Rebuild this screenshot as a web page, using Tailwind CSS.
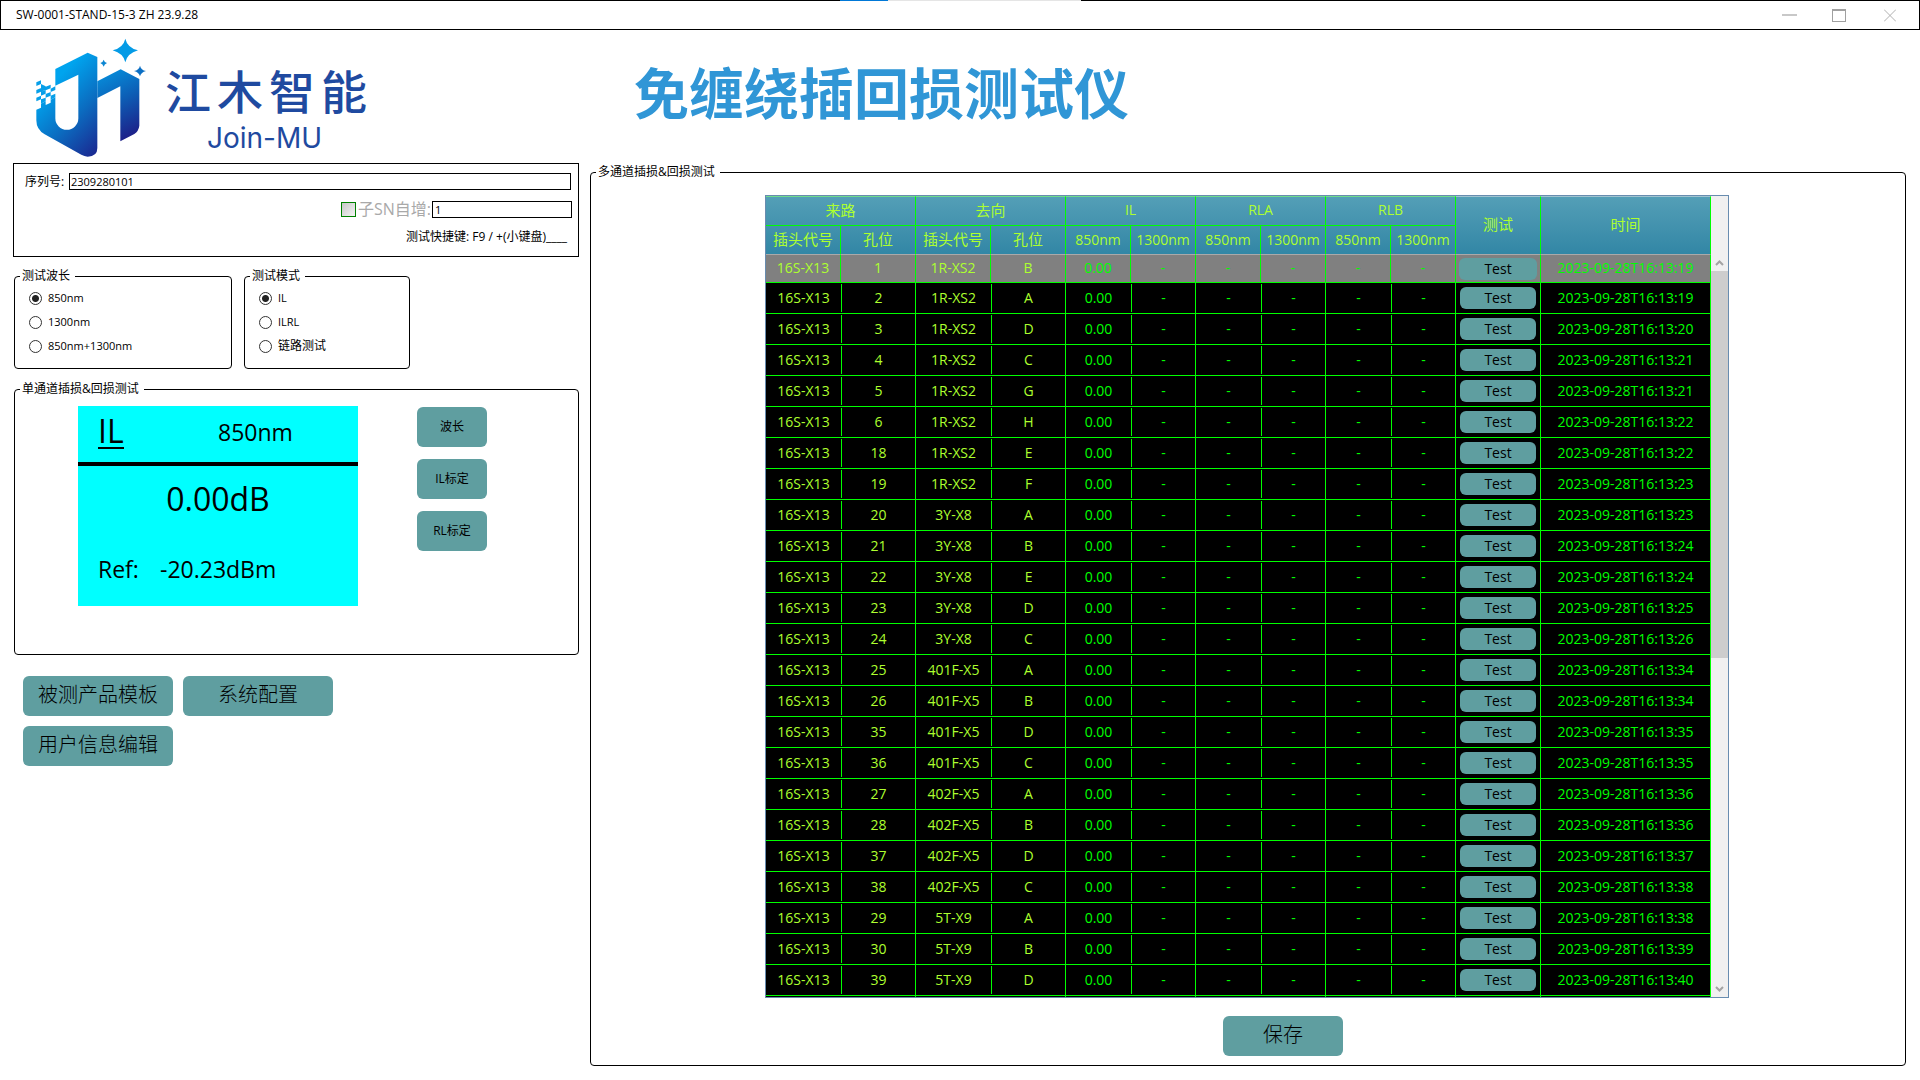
<!DOCTYPE html>
<html lang="zh-CN">
<head>
    <meta charset="UTF-8">
    <meta name="viewport" content="width=device-width, initial-scale=1.0">
    <title>SW-0001-STAND-15-3 ZH 23.9.28</title>
    <script src="https://cdn.jsdelivr.net/npm/@tailwindcss/browser@4"></script>
    <style>
        body {
            font-family: "Open Sans", "Noto Sans CJK SC", sans-serif;
        }
    </style>
</head>
<body class="bg-white text-black text-[12px] leading-4 min-h-screen flex flex-col">
    <!-- Title bar -->
    <header class="relative h-[30px] shrink-0 border border-black flex items-center justify-between pl-[15px] pr-[23px]">
        <span>SW-0001-STAND-15-3 ZH 23.9.28</span>
        <div class="absolute -top-px left-[839px] w-[241px] h-px bg-[#e5e5e5]">
            <div class="w-12 h-px bg-[#0078d7]"></div>
        </div>
        <div class="flex items-center gap-[35px] text-[#a0a0a0]">
            <button type="button" aria-label="最小化">
                <svg class="w-[15px] h-[13px]" viewBox="0 0 15 13" shape-rendering="crispEdges"><path d="M0 5h15v2H0z" fill="#c8c8c8"/></svg>
            </button>
            <button type="button" aria-label="最大化">
                <svg class="w-[14px] h-[13px]" viewBox="0 0 14 13" shape-rendering="crispEdges"><path d="M0 0h14v13H0zM1 2v10h12V2z" fill="#a0a0a0" fill-rule="evenodd"/></svg>
            </button>
            <button type="button" aria-label="关闭" class="ml-[3px]">
                <svg class="w-[12px] h-[13px]" viewBox="0 0 12 13"><path d="M0 0.5l12 12M12 0.5l-12 12" stroke="#b0b0b0" fill="none"/></svg>
            </button>
        </div>
    </header>

    <!-- Logo and heading -->
    <div class="h-[133px] shrink-0 flex">
        <div class="w-[634px] flex pl-9 pt-2">
            <svg class="w-[111px] h-[119px] shrink-0" viewBox="50 25 333 357" aria-hidden="true">
                <defs>
                    <linearGradient id="markLeft" gradientUnits="userSpaceOnUse" x1="80" y1="180" x2="250" y2="350">
                        <stop offset="0" stop-color="#00a4ee"/>
                        <stop offset="0.5" stop-color="#0b6cc0"/>
                        <stop offset="1" stop-color="#1a2a92"/>
                    </linearGradient>
                    <linearGradient id="markRight" gradientUnits="userSpaceOnUse" x1="240" y1="120" x2="340" y2="320">
                        <stop offset="0" stop-color="#0594e0"/>
                        <stop offset="0.5" stop-color="#0d5cb4"/>
                        <stop offset="1" stop-color="#1d1f88"/>
                    </linearGradient>
                </defs>
                <path fill="url(#markLeft)" d="M108 118L205 69L234 82V355Q234 381 205 381Q195 380 186 375L76 314Q51 300 51 272V240L65 234V222L79 215V226L94 219V210L108 203V266A34 34 0 0 0 177 266V135L108 168Z"/>
                <path fill="url(#markRight)" d="M234 155L304 119L360 148V288Q358 304 345 313L303 335V170L234 205Z"/>
                <path fill="#069fe9" d="M51 158l14-6v11l-14 6zM51 181l14-6v11l-14 6zM51 204l14-6v11l-14 6zM65 163l14 7v10l-14 6zM65 186l14-5v11l-14 6zM65 209l14-5v11l-14 7zM79 171l15-6v11l-15 6zM79 193l15-6v11l-15 6zM94 177l14-7v11l-14 6zM94 198l14-6v11l-14 7z"/>
                <path fill="#049be6" d="M318 27Q324 54 356 62Q324 71 318 98Q312 71 280 62Q312 54 318 27Z"/>
                <path fill="#0c86d2" d="M253 90Q255 98 263 100Q255 103 253 111Q251 103 243 100Q251 98 253 90Z"/>
                <path fill="#0b6fc4" d="M362 108Q365 121 380 124Q365 128 362 140Q359 128 344 124Q359 121 362 108Z"/>
            </svg>
            <div class="ml-[18px] mt-6 text-[#1f4aa0]">
                <div class="flex gap-[6px] text-[46px] leading-[58px] font-medium">
                    <span>江</span><span>木</span><span>智</span><span>能</span>
                </div>
                <div class="pl-[42px] text-[28px] leading-[36px] font-['Inter']">Join-MU</div>
            </div>
        </div>
        <h1 class="pt-[23px] text-[55px] leading-[80px] font-bold text-[#3096d6]">免缠绕插回损测试仪</h1>
    </div>

    <main class="flex flex-1 pl-[13px] pr-[14px] pb-[14px]">
        <div class="w-[566px] shrink-0">
            <!-- Serial number -->
            <div class="border border-black h-[94px] pt-[9px]">
                <div class="flex items-center pl-[11px] pr-[7px]">
                    <label for="serial" class="w-[44px]">序列号:</label>
                    <input id="serial" type="text" value="2309280101" class="flex-1 h-[17px] border border-black pl-px text-[11px]">
                </div>
                <div class="flex items-center justify-end mt-[11px] pr-[6px]">
                    <input id="autoInc" type="checkbox" class="appearance-none w-[15px] h-[15px] border border-[green] bg-linear-to-br from-[#c8c8c8] to-[#f4f4f4]">
                    <label for="autoInc" class="w-[76px] pl-[2px] text-[16px] leading-[17px] text-[#a9a9a9] whitespace-nowrap">子SN自增:</label>
                    <input type="text" value="1" aria-label="子SN" class="w-[140px] h-[17px] border border-black pl-[2px] text-[11px]">
                </div>
                <p class="mt-[11px] pr-[11px] text-right">测试快捷键: F9 / +(小键盘)____</p>
            </div>

            <div class="flex mt-[11px] ml-px gap-3">
                <fieldset class="w-[218px] border border-black rounded-[4px] pl-[14px] pt-[2px] pb-[10px]">
                    <legend class="-ml-[9px] pl-[2px] pr-[5px]">测试波长</legend>
                    <label class="flex items-center h-6 text-[11px]"><input type="radio" name="wave" checked class="appearance-none w-[13px] h-[13px] mr-[6px] rounded-full border border-[#333] bg-[radial-gradient(#212121_0_3px,#fff_4px)]">850nm</label>
                    <label class="flex items-center h-6 text-[11px]"><input type="radio" name="wave" class="appearance-none w-[13px] h-[13px] mr-[6px] rounded-full border border-[#333]">1300nm</label>
                    <label class="flex items-center h-6 text-[11px]"><input type="radio" name="wave" class="appearance-none w-[13px] h-[13px] mr-[6px] rounded-full border border-[#333]">850nm+1300nm</label>
                </fieldset>
                <fieldset class="w-[166px] border border-black rounded-[4px] pl-[14px] pt-[2px] pb-[10px]">
                    <legend class="-ml-[9px] pl-[2px] pr-[5px]">测试模式</legend>
                    <label class="flex items-center h-6 text-[11px]"><input type="radio" name="mode" checked class="appearance-none w-[13px] h-[13px] mr-[6px] rounded-full border border-[#333] bg-[radial-gradient(#212121_0_3px,#fff_4px)]">IL</label>
                    <label class="flex items-center h-6 text-[11px]"><input type="radio" name="mode" class="appearance-none w-[13px] h-[13px] mr-[6px] rounded-full border border-[#333]">ILRL</label>
                    <label class="flex items-center h-6"><input type="radio" name="mode" class="appearance-none w-[13px] h-[13px] mr-[6px] rounded-full border border-[#333]">链路测试</label>
                </fieldset>
            </div>

            <!-- Single channel -->
            <fieldset class="mt-3 ml-px border border-black rounded-[4px] pt-[9px] pb-12">
                <legend class="ml-[5px] pl-[2px] pr-[5px]">单通道插损&amp;回损测试</legend>
                <div class="flex pl-[63px]">
                    <div class="w-[280px] h-[200px] bg-[#00ffff] flex flex-col text-[23px] leading-8">
                        <div class="h-[60px] border-b-4 border-black flex items-center pl-5 pb-1">
                            <div class="w-[120px]"><span class="inline-block border-b-2 border-black text-[32px] leading-8">IL</span></div>
                            <span>850nm</span>
                        </div>
                        <div class="h-[66px] flex items-center justify-center text-[32px]">0.00dB</div>
                        <div class="h-[74px] flex items-center pl-5"><span class="w-[62px]">Ref:</span><span>-20.23dBm</span></div>
                    </div>
                    <div class="flex flex-col gap-3 ml-[59px] mt-px">
                        <button type="button" class="w-[70px] h-10 rounded-[6px] bg-[#5f9ea0]">波长</button>
                        <button type="button" class="w-[70px] h-10 rounded-[6px] bg-[#5f9ea0]">IL标定</button>
                        <button type="button" class="w-[70px] h-10 rounded-[6px] bg-[#5f9ea0]">RL标定</button>
                    </div>
                </div>
            </fieldset>

            <div class="flex flex-wrap gap-[10px] max-w-[400px] mt-[21px] pl-[10px] text-[20px] font-light">
                <button type="button" class="w-[150px] h-10 pb-[2px] rounded-[6px] bg-[#5f9ea0]">被测产品模板</button>
                <button type="button" class="w-[150px] h-10 pb-[2px] rounded-[6px] bg-[#5f9ea0]">系统配置</button>
                <button type="button" class="w-[150px] h-10 pb-[2px] rounded-[6px] bg-[#5f9ea0]">用户信息编辑</button>
            </div>
        </div>

        <!-- Multi channel -->
        <fieldset class="flex-1 min-w-0 ml-[11px] mt-px border border-black rounded-[4px] pt-[15px] pr-[2px]">
            <legend class="ml-[5px] pl-[2px] pr-[5px]">多通道插损&amp;回损测试</legend>
            <div class="w-[964px] mx-auto">
                <div class="h-[803px] border border-[#688caf] bg-black flex overflow-hidden">
                    <table class="table-fixed w-[945px] h-max shrink-0 border-separate border-spacing-0 text-center text-[14px] leading-[22px] text-[#adff2f]">
                        <colgroup>
                            <col class="w-[75px]"><col class="w-[75px]"><col class="w-[75px]"><col class="w-[75px]">
                            <col class="w-[65px]"><col class="w-[65px]"><col class="w-[65px]"><col class="w-[65px]"><col class="w-[65px]"><col class="w-[65px]">
                            <col class="w-[85px]"><col class="w-[170px]">
                        </colgroup>
                        <thead class="bg-linear-to-b from-[#549fb7] to-[#3186a5]">
                            <tr class="h-[30px]">
                                <th colspan="2" class="p-0 pb-[2px] font-normal text-[15px] border-r border-b border-t border-[#00ff00] border-t-[#6fdc8c]">来路</th>
                                <th colspan="2" class="p-0 pb-[2px] font-normal text-[15px] border-r border-b border-t border-[#00ff00] border-t-[#6fdc8c]">去向</th>
                                <th colspan="2" class="p-0 pb-[2px] font-normal border-r border-b border-t border-[#00ff00] border-t-[#6fdc8c]">IL</th>
                                <th colspan="2" class="p-0 pb-[2px] font-normal border-r border-b border-t border-[#00ff00] border-t-[#6fdc8c]">RLA</th>
                                <th colspan="2" class="p-0 pb-[2px] font-normal border-r border-b border-t border-[#00ff00] border-t-[#6fdc8c]">RLB</th>
                                <th rowspan="2" class="p-0 pb-1 font-normal text-[15px] border-r border-b border-t border-r-[#00ff00] border-b-[#a9a9a9] border-t-[#9fc4d0]">测试</th>
                                <th rowspan="2" class="p-0 pb-1 font-normal text-[15px] border-r border-b border-t border-r-[#00ff00] border-b-[#a9a9a9] border-t-[#9fc4d0]">时间</th>
                            </tr>
                            <tr class="h-[29px]">
                                <th class="p-0 pb-[2px] font-normal text-[15px] border-r border-b border-r-[#00ff00] border-b-[#a9a9a9]">插头代号</th>
                                <th class="p-0 pb-[2px] font-normal text-[15px] border-r border-b border-r-[#00ff00] border-b-[#a9a9a9]">孔位</th>
                                <th class="p-0 pb-[2px] font-normal text-[15px] border-r border-b border-r-[#00ff00] border-b-[#a9a9a9]">插头代号</th>
                                <th class="p-0 pb-[2px] font-normal text-[15px] border-r border-b border-r-[#00ff00] border-b-[#a9a9a9]">孔位</th>
                                <th class="p-0 font-normal border-r border-b border-r-[#00ff00] border-b-[#a9a9a9]">850nm</th>
                                <th class="p-0 font-normal border-r border-b border-r-[#00ff00] border-b-[#a9a9a9]">1300nm</th>
                                <th class="p-0 font-normal border-r border-b border-r-[#00ff00] border-b-[#a9a9a9]">850nm</th>
                                <th class="p-0 font-normal border-r border-b border-r-[#00ff00] border-b-[#a9a9a9]">1300nm</th>
                                <th class="p-0 font-normal border-r border-b border-r-[#00ff00] border-b-[#a9a9a9]">850nm</th>
                                <th class="p-0 font-normal border-r border-b border-r-[#00ff00] border-b-[#a9a9a9]">1300nm</th>
                            </tr>
                        </thead>
                        <tbody id="rows"></tbody>
                    </table>
                    <!-- Scrollbar -->
                    <div class="flex-1 bg-[#f0f0f0] flex flex-col">
                        <svg class="w-[17px] h-[75px] shrink-0" viewBox="0 0 17 75"><path d="M5 69l3.500-3.500 3.500 3.500" fill="none" stroke="#a3a3a3" stroke-width="2"/></svg>
                        <div class="h-[387px] bg-[#cdcdcd]"></div>
                        <svg class="w-[17px] h-[17px] shrink-0 mt-auto" viewBox="0 0 17 17"><path d="M5 7l3.500 3.500 3.500-3.500" fill="none" stroke="#a3a3a3" stroke-width="2"/></svg>
                    </div>
                </div>
                <button type="button" class="block w-[120px] h-10 mt-[18px] ml-[458px] pb-[2px] rounded-[6px] bg-[#5f9ea0] text-[20px] font-light">保存</button>
            </div>
        </fieldset>
    </main>

    <script>
        // hole no., target plug, target hole, minutes and seconds
        var data = [
            [1, '1R-XS2', 'B', '13:19'],
            [2, '1R-XS2', 'A', '13:19'],
            [3, '1R-XS2', 'D', '13:20'],
            [4, '1R-XS2', 'C', '13:21'],
            [5, '1R-XS2', 'G', '13:21'],
            [6, '1R-XS2', 'H', '13:22'],
            [18, '1R-XS2', 'E', '13:22'],
            [19, '1R-XS2', 'F', '13:23'],
            [20, '3Y-X8', 'A', '13:23'],
            [21, '3Y-X8', 'B', '13:24'],
            [22, '3Y-X8', 'E', '13:24'],
            [23, '3Y-X8', 'D', '13:25'],
            [24, '3Y-X8', 'C', '13:26'],
            [25, '401F-X5', 'A', '13:34'],
            [26, '401F-X5', 'B', '13:34'],
            [35, '401F-X5', 'D', '13:35'],
            [36, '401F-X5', 'C', '13:35'],
            [27, '402F-X5', 'A', '13:36'],
            [28, '402F-X5', 'B', '13:36'],
            [37, '402F-X5', 'D', '13:37'],
            [38, '402F-X5', 'C', '13:38'],
            [29, '5T-X9', 'A', '13:38'],
            [30, '5T-X9', 'B', '13:39'],
            [39, '5T-X9', 'D', '13:40']
        ];

        function pair(a, b, selected, color) {
            if (selected) {
                return '<td class="p-0 pb-[2px] border-r border-b border-[#00ff00] ' + color + '">' + a + '</td>' +
                    '<td class="p-0 pb-[2px] border-r border-b border-[#00ff00] ' + color + '">' + b + '</td>';
            }
            return '<td class="p-0 border-b border-[#00ff00] ' + color + '">' + a + '</td>' +
                '<td class="p-0 border-r border-b border-[#00ff00] ' + color + '"><div class="h-7 leading-7 border-l border-[#00ff00]">' + b + '</div></td>';
        }

        var html = '';
        data.forEach(function (r, i) {
            var sel = i === 0;
            html += '<tr class="' + (sel ? 'h-7 bg-[#808080]' : 'h-[31px]') + '">' +
                pair('16S-X13', r[0], sel, 'text-[#adff2f]') +
                pair(r[1], r[2], sel, 'text-[#adff2f]') +
                pair('0.00', '-', sel, 'text-[#00ff00]') +
                pair('-', '-', sel, 'text-[#00ff00]') +
                pair('-', '-', sel, 'text-[#00ff00]') +
                '<td class="p-0 border-r border-b border-[#00ff00]"><button type="button" class="block mx-auto h-[22px] rounded-[6px] bg-[#5f9ea0] text-black ' + (sel ? 'w-[78px]' : 'w-[76px]') + '">Test</button></td>' +
                '<td class="p-0 border-r border-b border-[#00ff00] text-[#00ff00] ' + (sel ? 'pb-[2px]' : '') + '">2023-09-28T16:' + r[3] + '</td></tr>';
        });
        // next row just peeks in under the last one
        html += '<tr class="h-[31px]">' + '<td colspan="2" class="border-r border-[#00ff00]"></td>'.repeat(5) +
            '<td class="border-r border-[#00ff00]"></td>'.repeat(2) + '</tr>';
        document.getElementById('rows').innerHTML = html;
    </script>
</body>
</html>
